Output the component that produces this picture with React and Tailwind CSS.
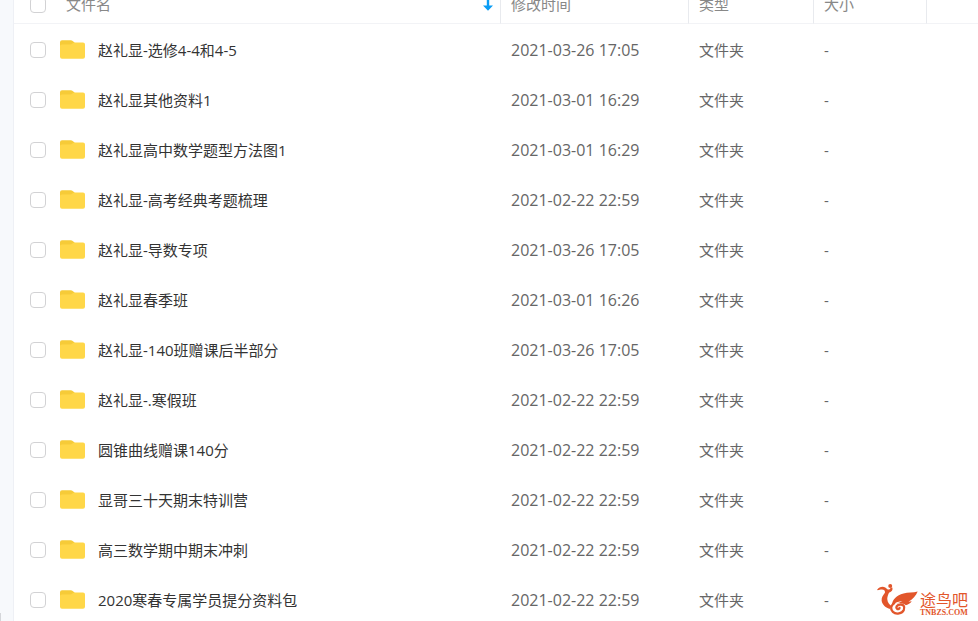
import React, { useState } from 'react'

const files = [
    { name: '赵礼显-选修4-4和4-5', time: '2021-03-26 17:05' },
    { name: '赵礼显其他资料1', time: '2021-03-01 16:29' },
    { name: '赵礼显高中数学题型方法图1', time: '2021-03-01 16:29' },
    { name: '赵礼显-高考经典考题梳理', time: '2021-02-22 22:59' },
    { name: '赵礼显-导数专项', time: '2021-03-26 17:05' },
    { name: '赵礼显春季班', time: '2021-03-01 16:26' },
    { name: '赵礼显-140班赠课后半部分', time: '2021-03-26 17:05' },
    { name: '赵礼显-.寒假班', time: '2021-02-22 22:59' },
    { name: '圆锥曲线赠课140分', time: '2021-02-22 22:59' },
    { name: '显哥三十天期末特训营', time: '2021-02-22 22:59' },
    { name: '高三数学期中期末冲刺', time: '2021-02-22 22:59' },
    { name: '2020寒春专属学员提分资料包', time: '2021-02-22 22:59' },
]

function CheckBox({ label, checked, onChange }) {
    return (
        <input
            type="checkbox"
            aria-label={label}
            checked={checked}
            onChange={onChange}
            className="h-4 w-4 shrink-0 appearance-none rounded border border-[#d2d2d4] bg-white checked:border-[#09aaff] checked:bg-[#09aaff]"
        />
    )
}

function FolderIcon() {
    return (
        <svg className="h-5 w-[26px]" viewBox="0 0 26 20" aria-hidden="true">
            <path
                d="M0 2.3Q0 0.3 2 0.3H10.6Q12 0.3 13 1.2L15 3V8H0Z"
                fill="#f6cb38"
            />
            <path
                d="M0 6Q0 4.4 2 4.4H10Q11.6 4.4 12.5 3.4L12.9 3Q13.6 2.4 14.8 2.4H23Q25 2.4 25 4.4V16.8Q25 18.8 23 18.8H2Q0 18.8 0 16.8Z"
                fill="#ffd748"
            />
        </svg>
    )
}

function SortArrow() {
    return (
        <svg className="h-4 w-3" viewBox="0 0 12 16" aria-hidden="true">
            <path d="M4.8 1H7.2V8.6H11L6 13.8L1 8.6H4.8Z" fill="#0a9df5" />
        </svg>
    )
}

function Watermark() {
    return (
        <div className="pointer-events-none absolute right-2.5 bottom-1 flex items-end text-[#e2562b]">
            <svg className="h-9 w-[43px]" viewBox="51 32 130 108" fill="currentColor" aria-hidden="true">
                {/* crest and head */}
                <circle cx="91" cy="47" r="6" />
                <path d="M51 59C57 50 67 47 76 51C81 54 84 59 88 57C91 55 92 50 97 51C100 58 95 65 88 66C85 71 82 78 82 86C83 97 88 103 95 107C92 110 91 113 91 116C77 113 67 103 65 91C64 80 70 74 75 67C76 60 72 57 66 57C60 57 56 60 51 59Z" />
                {/* wing */}
                <path d="M174 63C160 67 145 65 131 69C110 75 97 87 96 105C105 96 117 93 128 92C122 96 116 97 110 100C121 98 132 99 138 105C147 102 153 98 156 93C152 94 149 94 146 94C159 86 169 76 174 63Z" />
                {/* tail curl */}
                <path
                    d="M103 99C92 105 91 118 99 125C109 134 127 130 132 119C136 109 131 101 120 103C110 104 107 112 112 116C115 118 119 116 119 113"
                    fill="none"
                    stroke="currentColor"
                    strokeWidth="7"
                    strokeLinecap="round"
                />
            </svg>
            <div className="flex flex-col gap-0.5">
                <span className="font-['Noto_Sans_CJK_SC',sans-serif] text-base leading-4">途鸟吧</span>
                <span className="font-['Liberation_Serif',serif] text-[8px] leading-2 font-bold">
                    TNBZS.COM
                </span>
            </div>
        </div>
    )
}

export default function App() {
    const [selected, setSelected] = useState([])

    const handleSelect = (name) => {
        if (selected.includes(name)) {
            setSelected(selected.filter((item) => item !== name))
        } else {
            setSelected([...selected, name])
        }
    }
    const allSelected = selected.length === files.length
    const handleSelectAll = () => {
        setSelected(allSelected ? [] : files.map((file) => file.name))
    }

    return (
        <div className="relative flex h-screen overflow-hidden bg-white font-['Open_Sans','Noto_Sans_CJK_SC',sans-serif] text-[15px] text-[#666]">
            <aside className="flex w-3.5 shrink-0 items-end border-r border-[#eef0f5] bg-[#f7f9fc]">
                <div className="h-2 w-px bg-[#d4d6da]" />
            </aside>
            <main className="min-w-0 flex-1">
                <table className="-mt-3.5 w-full table-fixed border-separate border-spacing-0 text-left">
                    <colgroup>
                        <col />
                        <col className="w-[188px]" />
                        <col className="w-[125px]" />
                        <col className="w-[113px]" />
                        <col className="w-[51px]" />
                    </colgroup>
                    <thead>
                        <tr className="h-[38px] text-[#888]">
                            <th className="border-r border-b border-[#e8eaee] border-b-[#f2f3f6] p-0 pr-1.5 pl-4 font-normal">
                                <div className="flex items-center">
                                    <CheckBox
                                        label="全选"
                                        checked={allSelected}
                                        onChange={handleSelectAll}
                                    />
                                    <span className="ml-5 flex-1">文件名</span>
                                    <SortArrow />
                                </div>
                            </th>
                            <th className="border-r border-b border-[#e8eaee] border-b-[#f2f3f6] p-0 pl-2.5 font-normal">修改时间</th>
                            <th className="border-r border-b border-[#e8eaee] border-b-[#f2f3f6] p-0 pl-2.5 font-normal">类型</th>
                            <th className="border-r border-b border-[#e8eaee] border-b-[#f2f3f6] p-0 pl-2.5 font-normal">大小</th>
                            <th className="border-b border-[#f2f3f6] p-0" />
                        </tr>
                    </thead>
                    <tbody>
                        {files.map((file) => (
                            <tr key={file.name} className="h-[50px]">
                                <td className="p-0 pt-0.5 pl-4">
                                    <div className="flex items-center">
                                        <CheckBox
                                            label={file.name}
                                            checked={selected.includes(file.name)}
                                            onChange={() => handleSelect(file.name)}
                                        />
                                        <span className="mr-3 ml-3.5 shrink-0">
                                            <FolderIcon />
                                        </span>
                                        <span className="truncate text-[#333]">{file.name}</span>
                                    </div>
                                </td>
                                <td className="p-0 pt-0.5 pl-2.5 text-base">{file.time}</td>
                                <td className="p-0 pt-0.5 pl-2.5">文件夹</td>
                                <td className="p-0 pt-0.5 pl-2.5">-</td>
                                <td className="p-0" />
                            </tr>
                        ))}
                    </tbody>
                </table>
            </main>
            <Watermark />
        </div>
    )
}
